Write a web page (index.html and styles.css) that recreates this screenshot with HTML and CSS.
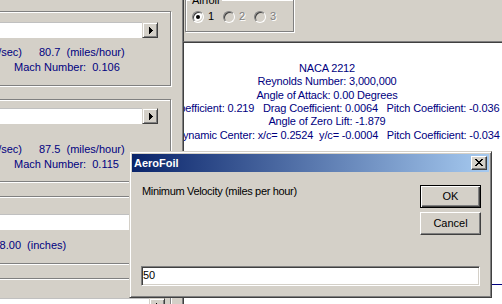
FILE: index.html
```html
<!DOCTYPE html>
<html lang="en">
<head>
    <meta charset="UTF-8">
    <title>AeroFoil</title>
    <link rel="stylesheet" href="styles.css">
</head>
<body>
    <div class="app">
        <div class="controls">
            <div class="group g1">
                <div class="scroll">
                    <div class="track"></div>
                    <div class="arrow"><svg width="4" height="7" viewBox="0 0 4 7"><path d="M0 0h1v7H0zM1 1h1v5H1zM2 2h1v3H2zM3 3h1v1H3z"/></svg></div>
                </div>
                <div class="row"><span class="fps">118.4  (feet/sec)</span><span class="mph">80.7  (miles/hour)</span></div>
                <div class="row mach">Mach Number:  0.106</div>
            </div>
            <div class="group g2">
                <div class="scroll">
                    <div class="track"></div>
                    <div class="arrow"><svg width="4" height="7" viewBox="0 0 4 7"><path d="M0 0h1v7H0zM1 1h1v5H1zM2 2h1v3H2zM3 3h1v1H3z"/></svg></div>
                </div>
                <div class="row"><span class="fps">128.3  (feet/sec)</span><span class="mph">87.5  (miles/hour)</span></div>
                <div class="row mach">Mach Number:  0.115</div>
            </div>
            <div class="group g3">
                <div class="scroll">
                    <div class="track"></div>
                    <div class="arrow"><svg width="4" height="7" viewBox="0 0 4 7"><path d="M0 0h1v7H0zM1 1h1v5H1zM2 2h1v3H2zM3 3h1v1H3z"/></svg></div>
                </div>
                <div class="row"><span class="chord-len">48.00</span><span>  (inches)</span></div>
            </div>
            <div class="group g4">
                <div class="scroll">
                    <div class="track"></div>
                    <div class="arrow"><svg width="4" height="7" viewBox="0 0 4 7"><path d="M0 0h1v7H0zM1 1h1v5H1zM2 2h1v3H2zM3 3h1v1H3z"/></svg></div>
                </div>
            </div>
        </div>

        <div class="view">
            <div class="view-head">
                <div class="airfoil">
                    <div class="airfoil-title">Airfoil</div>
                    <div class="choices">
                        <div class="choice"><span class="radio on"></span>1</div>
                        <div class="choice off"><span class="radio"></span>2</div>
                        <div class="choice off"><span class="radio"></span>3</div>
                    </div>
                </div>
            </div>
            <div class="view-body">
                <div class="readout">
                    <div>NACA 2212</div>
                    <div>Reynolds Number: 3,000,000</div>
                    <div>Angle of Attack: 0.00 Degrees</div>
                    <div>Lift Coefficient: 0.219   Drag Coefficient: 0.0064   Pitch Coefficient: -0.036</div>
                    <div>Angle of Zero Lift: -1.879</div>
                    <div>Aerodynamic Center: x/c= 0.2524  y/c= -0.0004   Pitch Coefficient: -0.034</div>
                </div>
                <div class="chord"></div>
            </div>
        </div>
    </div>

    <div class="dialog">
        <div class="titlebar">
            <span class="title">AeroFoil</span>
            <span class="close"><svg width="8" height="7" viewBox="0 0 8 7"><path d="M0 0h2v1H0zM6 0h2v1H6zM1 1h2v1H1zM5 1h2v1H5zM2 2h4v1H2zM3 3h2v1H3zM2 4h4v1H2zM1 5h2v1H1zM5 5h2v1H5zM0 6h2v1H0zM6 6h2v1H6z"/></svg></span>
        </div>
        <div class="dlg-body">
            <div class="dlg-top">
                <div class="prompt">Minimum Velocity (miles per hour)</div>
                <div class="dlg-buttons">
                    <div class="btn default">OK</div>
                    <div class="btn">Cancel</div>
                </div>
            </div>
            <div class="entry">50</div>
        </div>
    </div>
</body>
</html>
```

FILE: styles.css
```css
body {
    margin: 0;
    width: 502px;
    height: 304px;
    overflow: hidden;
    position: relative;
    background: #d4d0c8;
    font-family: "Liberation Sans", Arial, sans-serif;
    font-size: 11px;
    line-height: 13px;
}
.app {
    display: flex;
    height: 304px;
}

/* left column of group boxes, scrolled partly out of view */
.controls {
    flex: none;
    width: 258px;
    margin-left: -76px;
    color: #000080;
}
.group {
    width: 247px;
    box-sizing: border-box;
    border: 1px solid #808080;
    box-shadow: inset 1px 1px #fff, 1px 1px #fff;
}
.g1 {
    margin-top: 11px;
    padding-bottom: 11px;
}
.g1 .scroll { margin-top: 10px; }
.g1 .row { margin-top: 8px; }
.g2 {
    margin-top: 13px;
    padding-bottom: 10px;
}
.g2 .scroll { margin-top: 8px; }
.g2 .row { margin-top: 19px; }
.g3 {
    margin-top: 14px;
    padding-bottom: 11px;
}
.g3 .scroll { margin-top: 17px; }
.g3 .row { margin-top: 9px; }
.g4 {
    margin-top: 14px;
    height: 60px;
}
.g4 .scroll {
    margin-top: 19px;
    margin-right: 5px;
}
.group .row.mach {
    margin-top: 2px;
    margin-left: 89px;
}
.scroll {
    display: flex;
    height: 16px;
    margin-right: 12px;
}
.track {
    flex: 1;
    background: #fff;
    border-top: 1px solid #c0c0c0;
}
.arrow {
    width: 16px;
    height: 16px;
    box-sizing: border-box;
    display: flex;
    align-items: center;
    justify-content: center;
    background: #d4d0c8;
    border: 1px solid;
    border-color: #d4d0c8 #404040 #404040 #d4d0c8;
    box-shadow: inset 1px 1px #fff, inset -1px -1px #808080;
}
.arrow svg {
    fill: #000;
    margin-left: 1px;
}
.row {
    display: flex;
    white-space: pre;
}
.fps {
    width: 97px;
    text-align: right;
}
.mph {
    margin-left: 17px;
}
.chord-len {
    width: 96px;
    text-align: right;
}

/* right side view */
.view {
    flex: 1;
    display: flex;
    flex-direction: column;
    border-left: 1px solid #808080;
}
.view-head {
    height: 41px;
    flex: none;
    border-left: 1px solid #404040;
}
.airfoil {
    width: 109px;
    height: 33px;
    box-sizing: border-box;
    margin: -1px 0 0 1px;
    border: 1px solid #808080;
    box-shadow: inset 1px 1px #fff, 1px 1px #fff;
}
.airfoil-title {
    width: fit-content;
    margin: -6px 0 0 4px;
    padding: 0 2px;
    background: #d4d0c8;
}
.choices {
    display: flex;
    margin: 3px 0 0 6px;
}
.choice {
    width: 31px;
    display: flex;
    align-items: center;
    gap: 4px;
}
.choice.off {
    color: #808080;
    text-shadow: 1px 1px #fff;
}
.radio {
    position: relative;
    width: 12px;
    height: 12px;
    box-sizing: border-box;
    border-radius: 50%;
    background: #fff;
    border: 1px solid;
    border-color: #808080 #fff #fff #808080;
    box-shadow: inset 1px 1px #404040, inset -1px -1px #d4d0c8;
}
.choice.off .radio {
    background: #d4d0c8;
}
.radio.on::after {
    content: "";
    position: absolute;
    left: 3px;
    top: 3px;
    width: 4px;
    height: 4px;
    border-radius: 50%;
    background: #000;
}
.view-body {
    flex: 1;
    background: #fff;
    border-top: 1px solid #808080;
    border-left: 1px solid #404040;
    box-shadow: inset 0 1px #404040;
    overflow: hidden;
}
.readout {
    width: 286px;
    margin-top: 20px;
    display: flex;
    flex-direction: column;
    align-items: center;
    color: #000080;
    line-height: 13.35px;
    letter-spacing: -0.15px;
    white-space: pre;
}
.chord {
    margin: 142px 0 0 20px;
    border-top: 1px solid #000080;
}

/* input box dialog on top */
.dialog {
    position: absolute;
    left: 129px;
    top: 151px;
    width: 363px;
    height: 147px;
    box-sizing: border-box;
    padding: 2px;
    display: flex;
    flex-direction: column;
    background: #d4d0c8;
    border: 1px solid;
    border-color: #d4d0c8 #404040 #404040 #d4d0c8;
    box-shadow: inset 1px 1px #fff, inset -1px -1px #808080;
}
.titlebar {
    height: 18px;
    flex: none;
    display: flex;
    align-items: center;
    justify-content: space-between;
    padding: 0 2px;
    background: linear-gradient(to right, #0a246a, #a6caf0);
}
.title {
    color: #fff;
    font-weight: bold;
}
.close {
    width: 16px;
    height: 14px;
    box-sizing: border-box;
    display: flex;
    align-items: center;
    justify-content: center;
    background: #d4d0c8;
    border: 1px solid;
    border-color: #fff #404040 #404040 #fff;
    box-shadow: inset -1px -1px #808080;
}
.close svg {
    fill: #000;
    margin: 0 1px 1px 0;
}
.dlg-body {
    flex: 1;
    display: flex;
    flex-direction: column;
    padding: 13px 8px 9px 9px;
}
.dlg-top {
    display: flex;
    justify-content: space-between;
}
.prompt {
    margin-left: 1px;
    letter-spacing: -0.33px;
}
.dlg-buttons {
    display: flex;
    flex-direction: column;
    gap: 4px;
}
.btn {
    width: 61px;
    height: 23px;
    box-sizing: border-box;
    display: flex;
    align-items: center;
    justify-content: center;
    border: 1px solid;
    border-color: #fff #404040 #404040 #fff;
    box-shadow: inset -1px -1px #808080;
}
.btn.default {
    border-color: #000;
    box-shadow: inset 1px 1px #fff, inset -1px -1px #404040, inset -2px -2px #808080;
}
.entry {
    margin: auto 1px 0 0;
    height: 20px;
    box-sizing: border-box;
    padding-left: 1px;
    line-height: 16px;
    background: #fff;
    border: 1px solid;
    border-color: #808080 #fff #fff #808080;
    box-shadow: inset 1px 1px #404040, inset -1px -1px #d4d0c8;
}
```
